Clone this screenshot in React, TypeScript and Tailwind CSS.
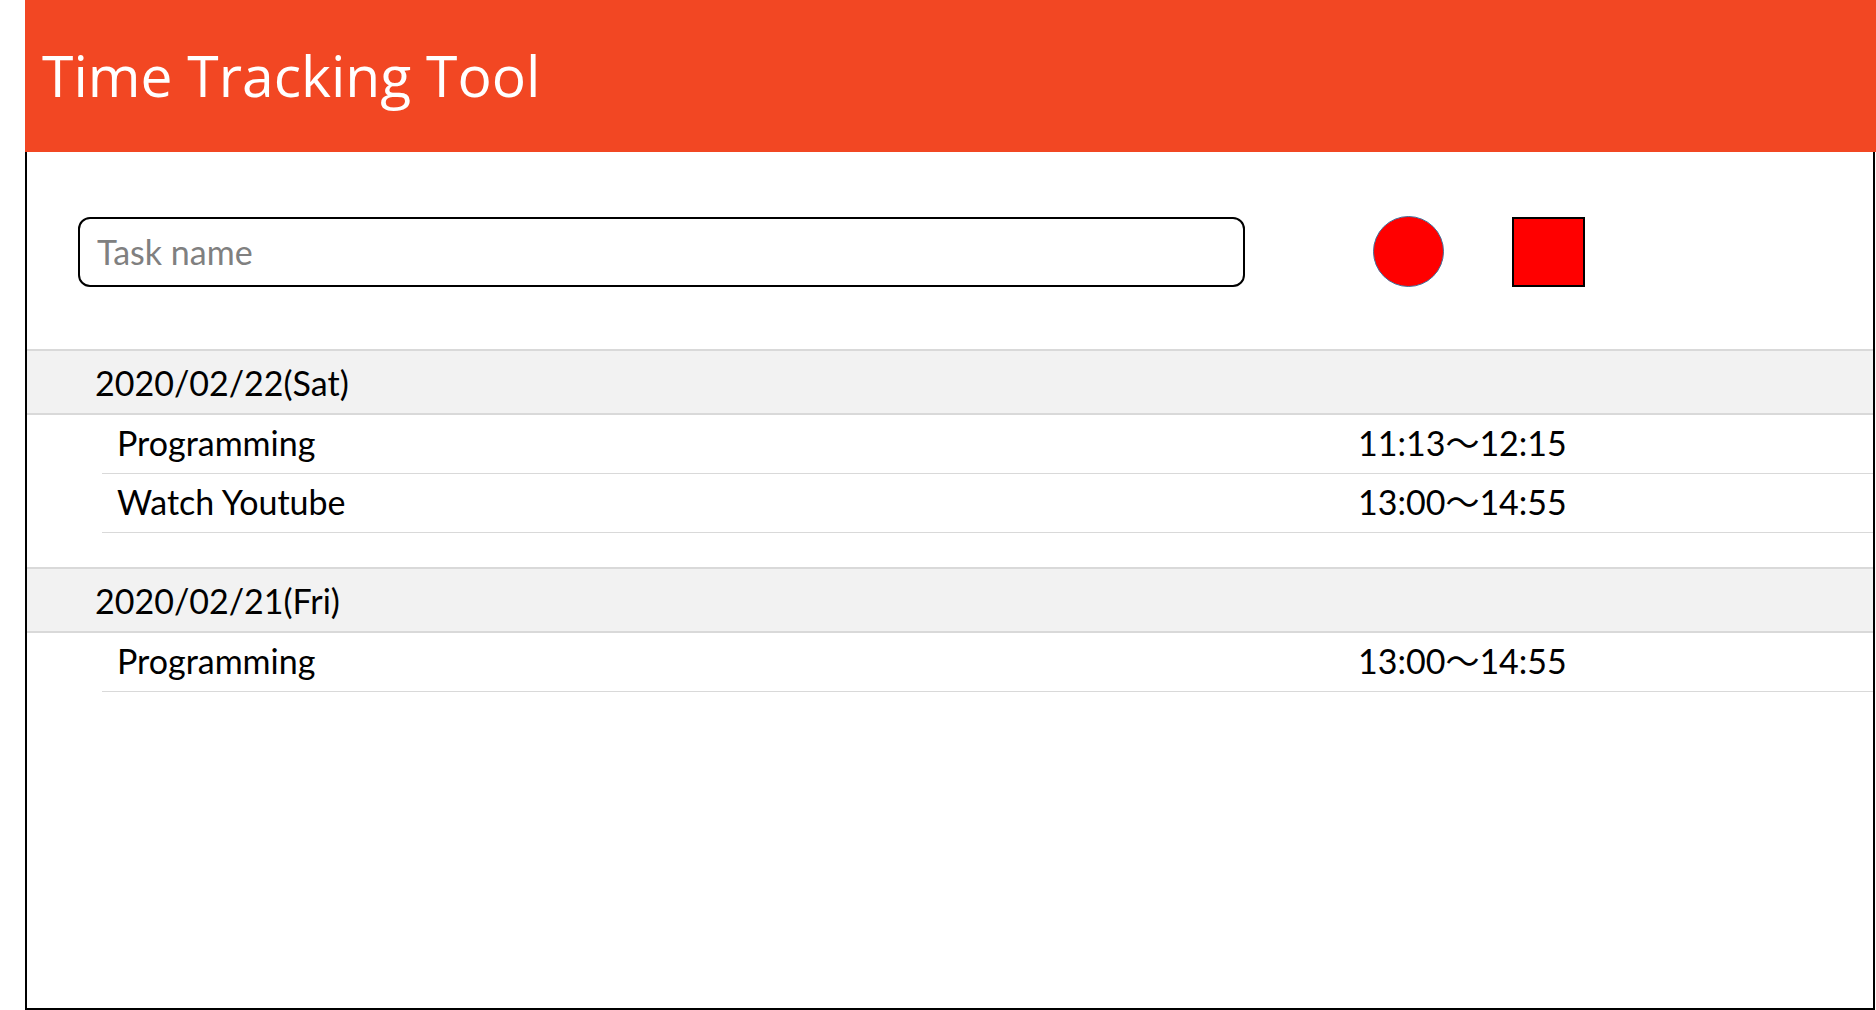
import React from "react";

const body = "font-['Lato','Noto_Sans_CJK_JP',sans-serif]";

type Entry = { name: string; time: string };
type Group = { date: string; entries: Entry[] };

const groups: Group[] = [
  {
    date: "2020/02/22(Sat)",
    entries: [
      { name: "Programming", time: "11:13〜12:15" },
      { name: "Watch Youtube", time: "13:00〜14:55" },
    ],
  },
  {
    date: "2020/02/21(Fri)",
    entries: [{ name: "Programming", time: "13:00〜14:55" }],
  },
];

function DateGroup({ group }: { group: Group }) {
  return (
    <div className="flex flex-col">
      <div className="h-[66px] border-y-2 border-[#d9d9d9] bg-[#f2f2f2] flex items-center pl-[68px]">
        <span className={`${body} text-[34px] text-black`}>{group.date}</span>
      </div>
      {group.entries.map((e, i) => (
        <div
          key={i}
          className="ml-[75px] h-[59px] border-b border-[#d9d9d9] grid grid-cols-[1256px_1fr] items-center pb-[3px]"
        >
          <span className={`${body} text-[34px] text-black pl-[15px]`}>{e.name}</span>
          <span className={`${body} text-[34px] text-black`}>{e.time}</span>
        </div>
      ))}
    </div>
  );
}

export default function App() {
  return (
    <div className="w-[1876px] h-[1010px] bg-white overflow-hidden">
      <div className="ml-[25px] w-[1851px] h-[1010px] flex flex-col">
        <header className="h-[152px] bg-[#f24723] flex items-center pl-[17px] shrink-0">
          <h1 className="font-['Open_Sans',sans-serif] text-[57px] text-white leading-normal">
            Time Tracking Tool
          </h1>
        </header>
        <main className="flex-1 border-l-2 border-r-2 border-b-2 border-black mr-[1px] flex flex-col">
          <div className="flex items-center pt-[64px] pl-[51px]">
            <input
              type="text"
              placeholder="Task name"
              className={`${body} w-[1167px] h-[70px] border-2 border-black rounded-[12px] pl-[17px] text-[34px] text-black placeholder:text-[#808080] outline-none`}
            />
            <button
              aria-label="start"
              className="ml-[128px] w-[71px] h-[71px] rounded-full bg-[#ff0000] border-[1.5px] border-[#41719c]"
            />
            <button
              aria-label="stop"
              className="ml-[68px] w-[73px] h-[70px] bg-[#ff0000] border-2 border-black"
            />
          </div>
          <div className="mt-[62px] flex flex-col gap-[34px]">
            {groups.map((g, i) => (
              <DateGroup key={i} group={g} />
            ))}
          </div>
        </main>
      </div>
    </div>
  );
}
